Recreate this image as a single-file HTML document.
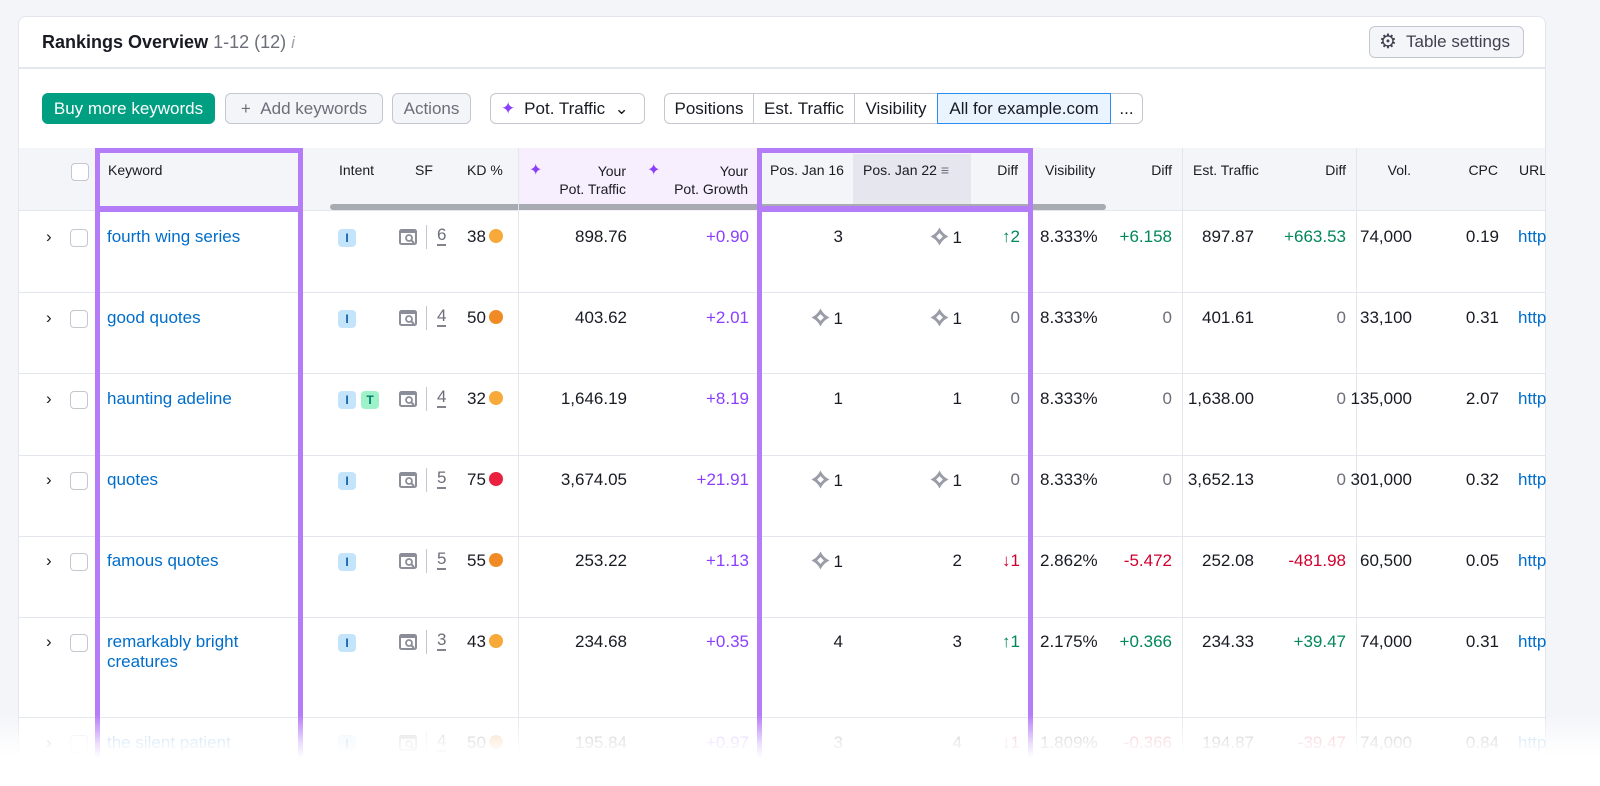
<!DOCTYPE html>
<html><head><style>
*{box-sizing:border-box;margin:0;padding:0}
html,body{width:1600px;height:786px;overflow:hidden}
body{background:#f4f5f9;font-family:"Liberation Sans",sans-serif;position:relative;color:#191b23}
.card{position:absolute;left:18px;top:16px;width:1528px;height:770px;background:#fff;border:1px solid #e4e6ee;border-bottom:none;border-radius:8px 8px 0 0;overflow:hidden}
.a{position:absolute;white-space:nowrap}
.btn{position:absolute;top:76px;height:31px;border:1px solid #c4c7cf;border-radius:6px;font-size:17px;line-height:29px;text-align:center;color:#6c6e79;background:#f4f5f9;white-space:nowrap}
.seg{position:absolute;top:76px;height:31px;border:1px solid #c4c7cf;font-size:17px;line-height:29px;text-align:center;color:#191b23;background:#fff;white-space:nowrap}
.hdr{position:absolute;left:0;top:131px;width:1528px;height:63px;background:#f4f5f9;border-bottom:1px solid #e4e6ee}
.h{position:absolute;font-size:14px;color:#191b23;white-space:nowrap}
.r{text-align:right}
.row{position:absolute;left:0;width:1528px;border-bottom:1px solid #e4e6ee}
.c{position:absolute;font-size:17px;white-space:nowrap}
.kw{color:#006dca}
.cb{position:absolute;width:18px;height:18px;border:1px solid #c4c7cf;border-radius:4px;background:#fff}
.tag{position:absolute;width:18px;height:18px;border-radius:4px;background:#c3e4fb;color:#0f5ea8;font-size:12px;text-align:center;line-height:18px;font-weight:bold}
.vl{position:absolute;top:131px;width:1px;height:700px;background:#e4e6ee}
.pur{position:absolute;border:5px solid #b57cf7;border-bottom:none}
.g{color:#00875a}.red{color:#d1002f}.p{color:#8a3ffc}
.dot{display:inline-block;width:14px;height:14px;border-radius:50%;vertical-align:-1px;margin-left:3px}
.dm{display:inline-block;width:19px;height:19px;vertical-align:-3px;margin-right:4px}
.sf{position:absolute;left:399px;top:1px;width:18px;height:18px}
.sfn{position:absolute;left:426px;top:-2px;height:24px;border-left:1px solid #c4c7cf;padding-left:10px;color:#6c6e79;font-size:17px;text-decoration:underline dashed #6c6e79;text-underline-offset:5px}
</style></head><body>
<svg width="0" height="0" style="position:absolute">
<defs>
<symbol id="dm" viewBox="0 0 18 18"><path fill-rule="evenodd" d="M9 0.5 C11 4.5 13.5 7 17.5 9 C13.5 11 11 13.5 9 17.5 C7 13.5 4.5 11 0.5 9 C4.5 7 7 4.5 9 0.5Z M9 5.8 L12.2 9 L9 12.2 L5.8 9Z" fill="#9a9da8"/></symbol>
<symbol id="sf" viewBox="0 0 18 18"><rect x="1" y="2" width="16" height="14" rx="1.5" fill="none" stroke="#8b8e99" stroke-width="2"/><rect x="1" y="2" width="16" height="3" fill="#8b8e99"/><circle cx="10" cy="10" r="3" fill="none" stroke="#8b8e99" stroke-width="1.8"/><path d="M12 12 L15 15" stroke="#8b8e99" stroke-width="2"/></symbol>
</defs></svg>
<div class="card">
<div class="a" style="left:23px;top:15px;font-size:18px;font-weight:bold">Rankings Overview <span style="font-weight:normal;color:#6c6e79">1-12 (12)</span> <span style="font-weight:normal;color:#a0a3ad;font-style:italic;font-size:17px">i</span></div>
<div class="btn" style="left:1350px;top:9px;width:155px;height:32px;line-height:30px;color:#3f4350;text-align:left;padding-left:36px">Table settings<span style="position:absolute;left:9px;top:0;font-size:20px">⚙</span></div>
<div style="position:absolute;left:0;top:50px;width:1528px;height:2px;background:#e4e6ee"></div>
<div class="btn" style="left:23px;width:173px;background:#009f81;border-color:#009f81;color:#fff">Buy more keywords</div>
<div class="btn" style="left:206px;width:158px">+&nbsp;&nbsp;Add keywords</div>
<div class="btn" style="left:373px;width:79px">Actions</div>
<div class="btn" style="left:471px;background:#fff;color:#191b23;width:155px;padding-left:18px"><span style="position:absolute;left:10px;color:#8a3ffc">✦</span>Pot. Traffic&nbsp; ⌄</div>
<div class="seg" style="left:645px;width:90px;border-radius:6px 0 0 6px">Positions</div>
<div class="seg" style="left:734px;width:102px">Est. Traffic</div>
<div class="seg" style="left:835px;width:84px">Visibility</div>
<div class="seg" style="left:1091px;width:33px;border-radius:0 6px 6px 0">...</div>
<div class="seg" style="left:918px;width:174px;border:1px solid #2b8ef0;background:#e9f4fe">All for example.com</div>

<div class="hdr"></div>
<div style="position:absolute;left:500px;top:131px;width:240px;height:63px;background:#f8effe"></div>
<div style="position:absolute;left:834px;top:137px;width:118px;height:57px;background:#e5e6ee"></div>
<div style="position:absolute;left:311px;top:187px;width:776px;height:6px;border-radius:3px;background:#a9abb3"></div>
<div class="cb" style="left:52px;top:146px"></div>
<div class="h" style="left:89px;top:145px">Keyword</div>
<div class="h" style="left:320px;top:145px">Intent</div>
<div class="h" style="left:396px;top:145px">SF</div>
<div class="h" style="left:448px;top:145px">KD %</div>
<div class="h" style="left:510px;top:143px;color:#8a3ffc;font-size:16px">✦</div>
<div class="h r" style="right:919px;top:145px;line-height:18px">Your<br>Pot. Traffic</div>
<div class="h" style="left:628px;top:143px;color:#8a3ffc;font-size:16px">✦</div>
<div class="h r" style="right:797px;top:145px;line-height:18px">Your<br>Pot. Growth</div>
<div class="h" style="left:751px;top:145px">Pos. Jan 16</div>
<div class="h" style="left:844px;top:145px">Pos. Jan 22 <span style="color:#6c6e79">≡</span></div>
<div class="h r" style="right:527px;top:145px">Diff</div>
<div class="h" style="left:1026px;top:145px">Visibility</div>
<div class="h r" style="right:373px;top:145px">Diff</div>
<div class="h" style="left:1174px;top:145px">Est. Traffic</div>
<div class="h r" style="right:199px;top:145px">Diff</div>
<div class="h r" style="right:134px;top:145px">Vol.</div>
<div class="h r" style="right:47px;top:145px">CPC</div>
<div class="h" style="left:1500px;top:145px">URL</div>
<div class="vl" style="left:499px"></div>
<div class="vl" style="left:1163px"></div>
<div class="vl" style="left:1337px"></div>

<div class="row" style="top:195px;height:81px"></div>
<div class="row" style="top:276px;height:81px"></div>
<div class="row" style="top:357px;height:82px"></div>
<div class="row" style="top:439px;height:81px"></div>
<div class="row" style="top:520px;height:81px"></div>
<div class="row" style="top:601px;height:100px"></div>
</div>

<div style="position:absolute;left:0;top:0;width:1600px;height:786px;overflow:hidden">
<div style="position:absolute;top:227px;left:0;width:1600px">
 <div class="c" style="left:46px">›</div><div class="cb" style="left:70px;top:2px"></div>
 <div class="c kw" style="left:107px">fourth wing series</div>
 <div class="tag" style="left:338px;top:2px">I</div>
 <svg class="sf"><use href="#sf"/></svg><div class="sfn">6</div>
 <div class="c" style="left:467px">38<span class="dot" style="background:#f7a93a"></span></div>
 <div class="c" style="right:973px">898.76</div><div class="c p" style="right:851px">+0.90</div>
 <div class="c" style="right:757px">3</div><div class="c" style="right:638px"><svg class="dm"><use href="#dm"/></svg>1</div><div class="c g" style="right:580px">↑2</div>
 <div class="c" style="left:1040px">8.333%</div><div class="c g" style="right:428px">+6.158</div>
 <div class="c" style="right:346px">897.87</div><div class="c g" style="right:254px">+663.53</div>
 <div class="c" style="right:188px">74,000</div><div class="c" style="right:101px">0.19</div><div class="c kw" style="left:1518px">http</div>
</div>
<div style="position:absolute;top:308px;left:0;width:1600px">
 <div class="c" style="left:46px">›</div><div class="cb" style="left:70px;top:2px"></div>
 <div class="c kw" style="left:107px">good quotes</div>
 <div class="tag" style="left:338px;top:2px">I</div>
 <svg class="sf"><use href="#sf"/></svg><div class="sfn">4</div>
 <div class="c" style="left:467px">50<span class="dot" style="background:#f08a24"></span></div>
 <div class="c" style="right:973px">403.62</div><div class="c p" style="right:851px">+2.01</div>
 <div class="c" style="right:757px"><svg class="dm"><use href="#dm"/></svg>1</div><div class="c" style="right:638px"><svg class="dm"><use href="#dm"/></svg>1</div><div class="c" style="right:580px;color:#6c6e79">0</div>
 <div class="c" style="left:1040px">8.333%</div><div class="c" style="right:428px;color:#6c6e79">0</div>
 <div class="c" style="right:346px">401.61</div><div class="c" style="right:254px;color:#6c6e79">0</div>
 <div class="c" style="right:188px">33,100</div><div class="c" style="right:101px">0.31</div><div class="c kw" style="left:1518px">http</div>
</div>
<div style="position:absolute;top:389px;left:0;width:1600px">
 <div class="c" style="left:46px">›</div><div class="cb" style="left:70px;top:2px"></div>
 <div class="c kw" style="left:107px">haunting adeline</div>
 <div class="tag" style="left:338px;top:2px">I</div><div class="tag" style="left:361px;top:2px;background:#9ef2c9;color:#007c65">T</div>
 <svg class="sf"><use href="#sf"/></svg><div class="sfn">4</div>
 <div class="c" style="left:467px">32<span class="dot" style="background:#f7a93a"></span></div>
 <div class="c" style="right:973px">1,646.19</div><div class="c p" style="right:851px">+8.19</div>
 <div class="c" style="right:757px">1</div><div class="c" style="right:638px">1</div><div class="c" style="right:580px;color:#6c6e79">0</div>
 <div class="c" style="left:1040px">8.333%</div><div class="c" style="right:428px;color:#6c6e79">0</div>
 <div class="c" style="right:346px">1,638.00</div><div class="c" style="right:254px;color:#6c6e79">0</div>
 <div class="c" style="right:188px">135,000</div><div class="c" style="right:101px">2.07</div><div class="c kw" style="left:1518px">http</div>
</div>
<div style="position:absolute;top:470px;left:0;width:1600px">
 <div class="c" style="left:46px">›</div><div class="cb" style="left:70px;top:2px"></div>
 <div class="c kw" style="left:107px">quotes</div>
 <div class="tag" style="left:338px;top:2px">I</div>
 <svg class="sf"><use href="#sf"/></svg><div class="sfn">5</div>
 <div class="c" style="left:467px">75<span class="dot" style="background:#e8223f"></span></div>
 <div class="c" style="right:973px">3,674.05</div><div class="c p" style="right:851px">+21.91</div>
 <div class="c" style="right:757px"><svg class="dm"><use href="#dm"/></svg>1</div><div class="c" style="right:638px"><svg class="dm"><use href="#dm"/></svg>1</div><div class="c" style="right:580px;color:#6c6e79">0</div>
 <div class="c" style="left:1040px">8.333%</div><div class="c" style="right:428px;color:#6c6e79">0</div>
 <div class="c" style="right:346px">3,652.13</div><div class="c" style="right:254px;color:#6c6e79">0</div>
 <div class="c" style="right:188px">301,000</div><div class="c" style="right:101px">0.32</div><div class="c kw" style="left:1518px">http</div>
</div>
<div style="position:absolute;top:551px;left:0;width:1600px">
 <div class="c" style="left:46px">›</div><div class="cb" style="left:70px;top:2px"></div>
 <div class="c kw" style="left:107px">famous quotes</div>
 <div class="tag" style="left:338px;top:2px">I</div>
 <svg class="sf"><use href="#sf"/></svg><div class="sfn">5</div>
 <div class="c" style="left:467px">55<span class="dot" style="background:#f08a24"></span></div>
 <div class="c" style="right:973px">253.22</div><div class="c p" style="right:851px">+1.13</div>
 <div class="c" style="right:757px"><svg class="dm"><use href="#dm"/></svg>1</div><div class="c" style="right:638px">2</div><div class="c red" style="right:580px">↓1</div>
 <div class="c" style="left:1040px">2.862%</div><div class="c red" style="right:428px">-5.472</div>
 <div class="c" style="right:346px">252.08</div><div class="c red" style="right:254px">-481.98</div>
 <div class="c" style="right:188px">60,500</div><div class="c" style="right:101px">0.05</div><div class="c kw" style="left:1518px">http</div>
</div>
<div style="position:absolute;top:632px;left:0;width:1600px">
 <div class="c" style="left:46px">›</div><div class="cb" style="left:70px;top:2px"></div>
 <div class="c kw" style="left:107px;line-height:20px">remarkably bright<br>creatures</div>
 <div class="tag" style="left:338px;top:2px">I</div>
 <svg class="sf"><use href="#sf"/></svg><div class="sfn">3</div>
 <div class="c" style="left:467px">43<span class="dot" style="background:#f7a93a"></span></div>
 <div class="c" style="right:973px">234.68</div><div class="c p" style="right:851px">+0.35</div>
 <div class="c" style="right:757px">4</div><div class="c" style="right:638px">3</div><div class="c g" style="right:580px">↑1</div>
 <div class="c" style="left:1040px">2.175%</div><div class="c g" style="right:428px">+0.366</div>
 <div class="c" style="right:346px">234.33</div><div class="c g" style="right:254px">+39.47</div>
 <div class="c" style="right:188px">74,000</div><div class="c" style="right:101px">0.31</div><div class="c kw" style="left:1518px">http</div>
</div>
<div style="position:absolute;top:733px;left:0;width:1600px;opacity:.35">
 <div class="c" style="left:46px">›</div><div class="cb" style="left:70px;top:2px"></div>
 <div class="c kw" style="left:107px">the silent patient</div>
 <div class="tag" style="left:338px;top:2px">I</div>
 <svg class="sf"><use href="#sf"/></svg><div class="sfn">4</div>
 <div class="c" style="left:467px">50<span class="dot" style="background:#f08a24"></span></div>
 <div class="c" style="right:973px">195.84</div><div class="c p" style="right:851px">+0.97</div>
 <div class="c" style="right:757px">3</div><div class="c" style="right:638px">4</div><div class="c red" style="right:580px">↓1</div>
 <div class="c" style="left:1040px">1.809%</div><div class="c red" style="right:428px">-0.366</div>
 <div class="c" style="right:346px">194.87</div><div class="c red" style="right:254px">-39.47</div>
 <div class="c" style="right:188px">74,000</div><div class="c" style="right:101px">0.84</div><div class="c kw" style="left:1518px">http</div>
</div>

<div class="pur" style="left:95px;top:148px;width:208px;height:638px"></div>
<div style="position:absolute;left:95px;top:206px;width:208px;height:6px;background:#b57cf7"></div>
<div class="pur" style="left:757px;top:148px;width:276px;height:638px"></div>
<div style="position:absolute;left:757px;top:206px;width:276px;height:6px;background:#b57cf7"></div>
<div style="position:absolute;left:0;top:715px;width:1600px;height:71px;background:linear-gradient(rgba(255,255,255,0),rgba(255,255,255,.75) 40%,#fff 60%)"></div>
</div>
</body></html>
